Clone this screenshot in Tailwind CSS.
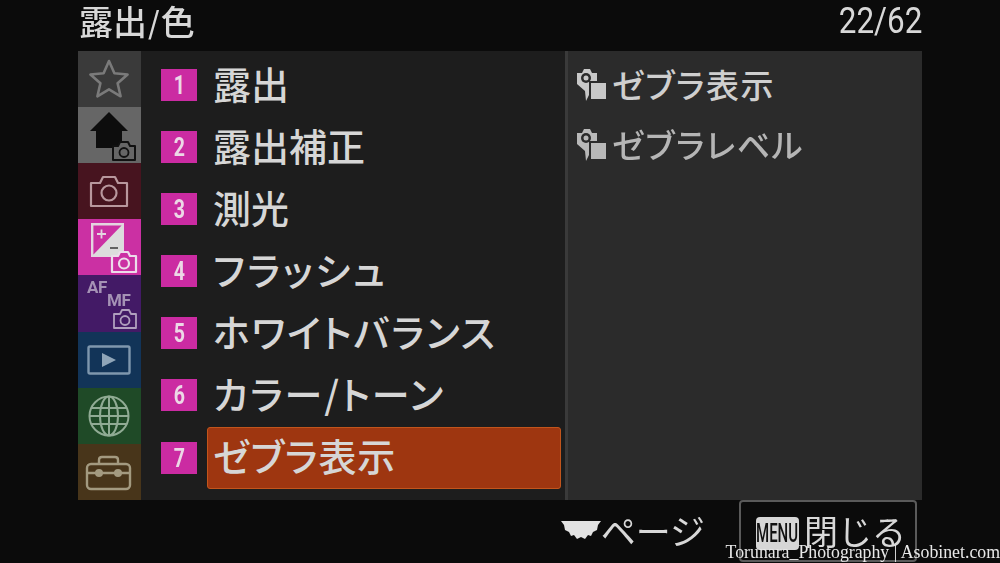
<!DOCTYPE html>
<html lang="ja">
<head>
  <meta charset="UTF-8" />
  <title>露出/色</title>
  <script src="https://cdn.jsdelivr.net/npm/@tailwindcss/browser@4"></script>
</head>
<body class="bg-[#0b0b0b]">
  <div class="relative w-[1000px] h-[563px] overflow-hidden flex flex-col font-['Noto_Sans_CJK_JP','Noto_Sans',sans-serif] text-[#d8d8d8] blur-[0.6px]">

    <!-- Title bar -->
    <header class="h-[51px] pl-[79px] pr-[78px] pb-[9px] flex items-center justify-between">
      <h1 class="text-[34px] leading-[42px] font-medium flex items-center"><span>露出</span><span class="mx-[1px] text-[30px]">/</span><span>色</span></h1>
      <span class="text-[37px] leading-[42px] font-['Roboto',sans-serif] scale-x-[0.85] origin-right">22/62</span>
    </header>

    <div class="flex h-[449px] mx-[78px]">
      <!-- Category tabs -->
      <nav class="w-[63px] flex flex-col shrink-0">
        <div class="h-[56px] pr-[2px] bg-[#3a3a3a] flex items-center justify-center">
          <svg width="44" height="44" viewBox="0 0 44 44" fill="none" stroke="#7a7a7a" stroke-width="2.600" stroke-linejoin="round"><path d="M22 4l5.400 12.300 13.200 1.200-10 8.800 3 13L22 32.400 10.400 39.300l3-13-10-8.800 13.200-1.200z"/></svg>
        </div>
        <div class="relative h-[56px] bg-[#666666]">
          <svg class="absolute left-[11px] top-[5px]" width="42" height="38" viewBox="0 0 42 38" fill="#0d0d0d"><path d="M20 0L39 19h-6v17H7V19H1z"/></svg>
          <svg class="absolute left-[33px] top-[33px]" width="26" height="21" viewBox="0 0 26 21" fill="#666666" stroke="#111" stroke-width="1.800" stroke-linejoin="round"><path d="M2 6h5l2-4h8l2 4h5v14H2z" stroke-width="2"/><circle cx="13" cy="12.500" r="4.500"/></svg>
        </div>
        <div class="h-[56px] pr-[2px] bg-[#47141f] flex items-center justify-center">
          <svg width="40" height="34" viewBox="0 0 40 34" fill="none" stroke="#b8979d" stroke-width="2.200" stroke-linejoin="round"><path d="M2 9h9l3-6h12l3 6h9v23H2z"/><circle cx="20" cy="19" r="7.500"/></svg>
        </div>
        <div class="relative h-[56px] bg-[#cb30a3]">
          <svg class="absolute left-[13px] top-[4px]" width="33" height="34" viewBox="0 0 33 34"><path d="M1.200 1.200h30.600v31.600H1.200z" fill="#cb30a3" stroke="#e4d5e0" stroke-width="2.400"/><path d="M32 1v32H1z" fill="#dcdcdc"/><path d="M6 11h9M10.500 6.500v9" stroke="#e4d5e0" stroke-width="1.800"/><path d="M19 25h8" stroke="#555" stroke-width="1.800"/></svg>
          <svg class="absolute left-[32px] top-[31px]" width="28" height="24" viewBox="0 0 28 24" fill="#cb30a3" stroke="#ecdcea" stroke-width="2.200" stroke-linejoin="round"><path d="M2 6h6l2-4h8l2 4h6v16H2z"/><circle cx="14" cy="13.500" r="5"/></svg>
        </div>
        <div class="relative h-[57px] bg-[#431a66] text-[#a592b5] font-bold font-['Roboto',sans-serif]">
          <span class="absolute left-[9px] top-[2px] text-[17px] leading-[20px] tracking-[-0.5px]">AF</span>
          <span class="absolute left-[29px] top-[15px] text-[17px] leading-[20px] tracking-[-0.5px]">MF</span>
          <svg class="absolute left-[34px] top-[33px]" width="26" height="22" viewBox="0 0 26 22" fill="none" stroke="#b09fbe" stroke-width="1.800" stroke-linejoin="round"><path d="M2 6h6l2-4h7l2 4h5v14H2z"/><circle cx="13" cy="12.500" r="4.500"/></svg>
        </div>
        <div class="h-[56px] pr-[2px] bg-[#123458] flex items-center justify-center">
          <svg width="44" height="30" viewBox="0 0 44 30"><rect x="1.500" y="1.500" width="41" height="27" rx="1.500" fill="none" stroke="#7f97ad" stroke-width="2.400"/><path d="M15 8l14 7-14 7z" fill="#8fa5b8"/></svg>
        </div>
        <div class="h-[56px] pr-[2px] bg-[#1f4a27] flex items-center justify-center">
          <svg width="42" height="42" viewBox="0 0 42 42" fill="none" stroke="#90ab94" stroke-width="2"><circle cx="21" cy="21" r="19.500"/><ellipse cx="21" cy="21" rx="9" ry="19.500"/><path d="M21 1.500v39M3 13h36M1.500 21h39M3 29h36"/></svg>
        </div>
        <div class="h-[56px] pr-[2px] bg-[#48351a] flex items-center justify-center">
          <svg width="47" height="37" viewBox="0 0 47 37" fill="none" stroke="#a39a80" stroke-width="2.400" stroke-linejoin="round"><rect x="2" y="10" width="43" height="25" rx="4"/><path d="M14 10V6q0-3 3-3h13q3 0 3 3v4M2 19h43"/><circle cx="14" cy="19" r="4" fill="#a39a80" stroke="none"/><circle cx="33" cy="19" r="4" fill="#a39a80" stroke="none"/></svg>
        </div>
      </nav>

      <!-- Menu list -->
      <ul class="w-[424px] shrink-0 bg-[#1d1d1d] pt-[3px] text-[38px] font-medium leading-[58px] text-[#d6d6d6] [font-feature-settings:'palt']">
        <li class="h-[62px] flex items-start pl-[20px]"><span class="w-[36px] h-[32px] mt-[15px] mr-[16px] bg-[#cb2ba2] flex items-center justify-center text-[26px] leading-none font-bold font-['Roboto',sans-serif] text-[#ecd8e6]"><span class="scale-x-75">1</span></span><span>露出</span></li>
        <li class="h-[62px] flex items-start pl-[20px]"><span class="w-[36px] h-[32px] mt-[15px] mr-[16px] bg-[#cb2ba2] flex items-center justify-center text-[26px] leading-none font-bold font-['Roboto',sans-serif] text-[#ecd8e6]"><span class="scale-x-75">2</span></span><span>露出補正</span></li>
        <li class="h-[62px] flex items-start pl-[20px]"><span class="w-[36px] h-[32px] mt-[15px] mr-[16px] bg-[#cb2ba2] flex items-center justify-center text-[26px] leading-none font-bold font-['Roboto',sans-serif] text-[#ecd8e6]"><span class="scale-x-75">3</span></span><span>測光</span></li>
        <li class="h-[62px] flex items-start pl-[20px]"><span class="w-[36px] h-[32px] mt-[15px] mr-[16px] bg-[#cb2ba2] flex items-center justify-center text-[26px] leading-none font-bold font-['Roboto',sans-serif] text-[#ecd8e6]"><span class="scale-x-75">4</span></span><span class="tracking-[2.600px]">フラッシュ</span></li>
        <li class="h-[62px] flex items-start pl-[20px]"><span class="w-[36px] h-[32px] mt-[15px] mr-[16px] bg-[#cb2ba2] flex items-center justify-center text-[26px] leading-none font-bold font-['Roboto',sans-serif] text-[#ecd8e6]"><span class="scale-x-75">5</span></span><span class="tracking-[1.800px]">ホワイトバランス</span></li>
        <li class="h-[62px] flex items-start pl-[20px]"><span class="w-[36px] h-[32px] mt-[15px] mr-[16px] bg-[#cb2ba2] flex items-center justify-center text-[26px] leading-none font-bold font-['Roboto',sans-serif] text-[#ecd8e6]"><span class="scale-x-75">6</span></span><span class="tracking-[1.900px]">カラー/トーン</span></li>
        <li class="h-[62px] mt-[1px] flex items-start pl-[20px]"><span class="w-[36px] h-[32px] mt-[15px] mr-[10px] bg-[#cb2ba2] flex items-center justify-center text-[26px] leading-none font-bold font-['Roboto',sans-serif] text-[#ecd8e6]"><span class="scale-x-75">7</span></span><span class="w-[354px] h-[62px] pl-[5px] leading-[54px] tracking-[0.800px] bg-[#9e3610] border border-[#c2551c] rounded-[3px]">ゼブラ表示</span></li>
      </ul>

      <!-- Sub menu -->
      <div class="flex-1 border-l-[3px] border-[#3a3a3a] bg-[#2b2b2b] pt-[4px] text-[33px] font-medium text-[#cfcfcf] tracking-[1.500px] [font-feature-settings:'palt']">
        <div class="h-[60px] flex items-center pl-[8px]">
          <svg class="mr-[4px]" width="32" height="36" viewBox="0 0 32 36" fill="#c8c8c8"><path d="M1 6h5l2-4h6l2 4h5v11h-8v11l-3 6-1-10-8-7z"/><circle cx="10" cy="11" r="5" fill="#2b2b2b"/><circle cx="10" cy="11" r="2.500"/><rect x="14" y="15" width="17" height="18" stroke="#2b2b2b" stroke-width="2"/></svg>
          <span>ゼブラ表示</span>
        </div>
        <div class="h-[60px] flex items-center pl-[8px]">
          <svg class="mr-[4px]" width="32" height="36" viewBox="0 0 32 36" fill="#b8b8b8"><path d="M1 6h5l2-4h6l2 4h5v11h-8v11l-3 6-1-10-8-7z"/><circle cx="10" cy="11" r="5" fill="#2b2b2b"/><circle cx="10" cy="11" r="2.500"/><rect x="14" y="15" width="17" height="18" stroke="#2b2b2b" stroke-width="2"/></svg>
          <span class="text-[#b5b5b5]">ゼブラレベル</span>
        </div>
      </div>
    </div>

    <!-- Footer -->
    <footer class="flex-1 flex justify-end items-start pr-[83px]">
      <div class="flex items-center h-[58px] mr-[34px] text-[35px] leading-none">
        <svg width="40" height="22" viewBox="0 0 40 22" fill="#e2e2e2"><path d="M0 3h40l-3 4-1 5-4 2-2 4-3-1-3 4-4-2-4 2-3-4-3 1-2-4-4-2-1-5z"/></svg>
        <span>ページ</span>
      </div>
      <div class="w-[178px] h-[62px] border-2 border-[#5a5a5a] rounded-[4px] flex items-start pl-[15px]">
        <span class="w-[43px] h-[33px] mt-[15px] mr-[5px] bg-[#d6d6d6] rounded-[4px] flex items-center justify-center text-[#111] text-[25px] font-medium leading-none font-['Roboto',sans-serif] shrink-0"><span class="scale-x-[0.6]">MENU</span></span>
        <span class="text-[34px] leading-[50px] mt-[4px]">閉じる</span>
      </div>
    </footer>

    <!-- Watermark -->
    <div class="absolute right-0 bottom-0 h-[21px] text-[17.800px] leading-[20px] text-[#e8e8e8] font-['Liberation_Serif',serif] whitespace-nowrap">Torunara_Photography | Asobinet.com</div>
  </div>
</body>
</html>
